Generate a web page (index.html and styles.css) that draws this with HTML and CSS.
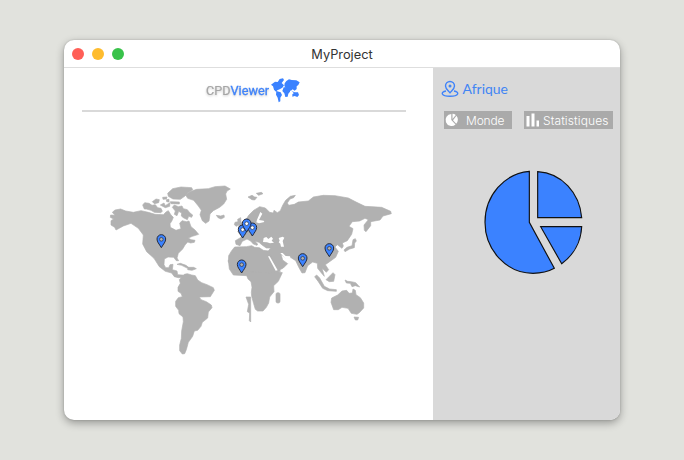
FILE: index.html
```html
<!DOCTYPE html>
<html lang="fr">
<head>
<meta charset="utf-8">
<title>MyProject</title>
<link rel="stylesheet" href="styles.css">
</head>
<body>
<main class="window">
  <header class="titlebar">
    <div class="controls"><i class="dot red"></i><i class="dot yellow"></i><i class="dot green"></i></div>
    <h1 class="title">MyProject</h1>
  </header>
  <div class="content">
    <section class="viewer">
      <div class="brand">
        <svg class="wordmark" width="65" height="20" viewBox="0 0 65 20"><text class="cpd" x="1" y="15" textLength="24.5" lengthAdjust="spacingAndGlyphs">CPD</text><text class="view" x="25.5" y="15" textLength="38.5" lengthAdjust="spacingAndGlyphs">Viewer</text></svg>
        <svg class="globe" width="30" height="26" viewBox="243 20 90 78"><path d="M243 43l12-9 8 1 6-9 10-2 3 5-7 9 7 7-5 7-8 5-7 3-4 4-6-6-3-10zM259 62l13 4 4 8-5 8 0 11-5 3-3-14-5-9zM284 39l5-7 8-5 8 2 14 1 10 6-4 8-5 4 0 8-6 5-6-4-6 5-5-6-9-3-5-6zM281 51l11-2 8 7 0 8-5 6-2 9-7 1-3-11-6-7zM307 72l7-6 10 0 3 8-5 6-8-3-7 2zM305 62l9 4-2 3z"/></svg>
      </div>
      <hr class="rule">
      <svg class="map" width="290" height="178" viewBox="0 0 870 534">
        <g class="land">
          <path d="M30 90L47 87 62 93 85 97 108 92 130 97 150 103 175 104 183 96 190 92 198 105 205 112 200 124 195 131 196 142 213 151 228 146 224 130 231 122 244 125 252 123 258 140 270 150 281 163 262 169 250 174 258 179 270 181 268 187 257 189 248 186 240 195 233 207 220 220 216 234 221 242 214 242 206 232 189 231 178 237 177 254 182 263 191 263 195 254 204 253 202 269 216 273 218 284 231 285 243 287 239 292 220 293 208 290 200 279 181 274 163 260 147 235 125 215 113 192 115 165 100 145 78 130 55 138 33 150 29 142 18 135 18 122 26 117 16 112 17 105 30 106 22 97Z"/>
          <path d="M188 40L203 26 228 21 260 23 263 29 250 37 240 48 226 58 204 57 190 49Z"/>
          <path d="M113 75L119 68 132 70 141 76 151 74 158 83 168 85 172 94 167 98 148 97 138 91 124 87 118 87ZM142 65L153 57 163 59 161 68 148 71ZM166 75L177 69 181 77 195 68 194 79 181 83ZM173 52L186 51 184 57 174 58ZM184 59l8-1 0 8-7-1ZM202 82L208 75 220 80 231 78 235 86 247 89 255 99 263 105 260 112 251 109 247 119 235 113 229 108 230 99 221 94 216 107 208 103 211 93ZM196 65l27 1 0 6-25-1Z"/>
          <path d="M242 45L254 35 275 28 310 26 330 20 360 18 376 27 366 33 362 42 365 58 356 72 344 82 325 92 315 102 312 123 302 130 292 122 285 104 289 91 280 78 266 61 248 55Z"/>
          <path d="M334 106l13 2 10-3 1 7-10 5-9-4Z"/>
          <path d="M216 253l10-3 17 6 10 8-5 1-18-9ZM250 262l16 0 8 4-13 5-13-2Z"/>
          <g transform="translate(180 240)">
            <path d="M58 43L67 41 80 45 91 47 98 60 110 68 126 74 145 83 148 91 141 102 136 110 103 111 108 119 124 125 139 135 141 143 130 156 128 174 112 187 108 199 98 211 88 213 83 229 70 247 64 269 59 281 52 282 44 272 44 255 49 235 50 213 55 185 54 171 42 161 41 151 32 139 32 124 40 113 52 110 48 100 39 94 39 82 46 70 43 59Z"/>
            <path d="M190 0L193 27 205 45 245 47 249 57 258 65 261 82 259 97 260 109 266 131 271 148 278 153 294 153 304 142 311 129 314 111 327 95 326 77 340 64 352 38 342 36 333 31 316 0Z"/>
            <path d="M243 111l14 0 0 75-4-4 1-23-7-4 4-22Z"/><rect x="333" y="98" width="12" height="31" rx="5"/>
          </g>
          <path d="M370 245L371 227 380 212 389 201 424 200 440 197 449 202 463 203 475 211 491 213 503 218 526 274 495 280 387 270Z"/>
          <path d="M391 182L393 193 405 197 412 184 426 177 437 183 445 192 456 196 458 192 449 184 462 187 470 194 484 204 497 204 490 213 504 242 519 272 535 264 548 251 533 240 528 222 542 234 558 233 572 242 582 263 591 279 600 278 608 257 623 246 637 250 638 265 651 281 658 289 651 264 664 277 671 269 661 254 678 242 692 232 700 214 690 201 697 194 711 205 715 198 712 189 727 182 740 163 744 146 732 139 742 125 764 123 780 115 790 119 777 135 778 151 783 155 797 137 797 125 825 120 834 108 859 101 857 94 830 82 780 79 755 67 730 54 690 47 655 46 625 51 610 63 580 66 568 73 551 76 547 69 555 57 566 53 571 46 556 49 542 61 533 76 526 92 517 98 507 91 505 99 494 97 481 84 464 80 446 91 431 106 421 122 423 134 412 151 398 154 410 171Z"/>
          <path d="M398 118l9-5 1 12 7 10-3 9-12 1 2-11-8 5-6-5 2-7 9-2ZM429 51l12-5 8 5 7 1-7 8-8-1ZM454 40l15-3 5 4-13 5Z"/>
          <path d="M744 179l7-3 3 7-5 6-1 14-14 4-14 8-3-5 9-8 15-5Z"/>
          <path d="M635 285l9 9 14 25 16 8 20 2 0 5-26-2-15-7-13-20-11-15ZM666 296l18-18 6 6-4 20-13 1-10-6ZM720 300l8 4 11 1 13 3 12 13-13-4-10 3-5-10-12-1Z"/>
          <path d="M678 367L680 354 698 345 711 333 725 331 732 340 742 339 744 327 751 331 753 344 766 353 776 369 776 384 763 398 756 403 739 400 729 385 711 382 700 389 686 389ZM747 411l14 1-3 8-7 0Z"/>
        </g>
        <g class="water">
          <path d="M474 186l2-12 8-3 6 6 9-7 5 6-4 6 7 6-12 2-9-3Z"/><path d="M521 174l12-4 5 3-5 10 4 17-9 0-2-9-5-4 3-5Z"/>
          <path d="M456 119l10-23 6 5-10 19 14 2 2 4-16 4-8-3Z"/>
          <path d="M489 229l5 0 24 42-6 1ZM526 219l7 0 9 9 13 1 2 7-15 1Z"/>
        </g>
        <defs><g id="pin"><path class="pin" d="M0 19C-7 7-13 2-13-7a13 13 0 0 1 26 0C13 2 7 7 0 19Z"/><circle class="pin-hole" cy="-6" r="5.500"/></g></defs>
        <use href="#pin" x="169" y="184"/><g class="light"><use href="#pin" x="442" y="149"/><use href="#pin" x="413" y="155"/><use href="#pin" x="425" y="137"/></g>
        <use href="#pin" x="410" y="260"/><use href="#pin" x="593" y="241"/><use href="#pin" x="673" y="211"/>
      </svg>
    </section>
    <aside class="panel">
      <div class="region">
        <svg width="18" height="17" viewBox="0 0 18 17"><path d="M9 11.800C7 9.500 4.500 7.800 4.500 5a4.500 4.500 0 0 1 9 0C13.500 7.800 11 9.500 9 11.800ZM5 10C-1 11 0 15.300 9 15.300s10-4.300 4-5.300"/><circle class="fill" cx="9" cy="5" r="1.500"/></svg>
        <svg width="50" height="20" viewBox="0 0 50 20"><text x="1.500" y="14.500" textLength="45.500" lengthAdjust="spacingAndGlyphs">Afrique</text></svg>
      </div>
      <nav class="tabs">
        <button class="tab world"><svg width="14" height="14" viewBox="0 0 14 14"><path d="M6.300 1v6l4.200 4.500A6 6 0 1 1 6.300 1ZM7.500.8A6 6 0 0 1 10.800 2L7.500 6ZM11.500 2.800a6 6 0 0 1-.3 8L8 7.200Z"/></svg><svg class="label" width="42" height="18" viewBox="0 0 42 18"><text x="1" y="13.500" textLength="38.500">Monde</text></svg></button>
        <button class="tab stats"><svg width="14" height="14" viewBox="0 0 14 14"><path d="M1.500 3h3v10.500h-3ZM6.500 .5h3v13h-3ZM11.500 7.500H14v6h-2.500Z"/></svg><svg class="label" width="68" height="18" viewBox="0 0 68 18"><text x="2" y="13.500" textLength="65.500">Statistiques</text></svg></button>
      </nav>
      <svg class="pie" width="100" height="106" viewBox="0 0 300 318">
        <path d="M139 10C65 16 6 82 6 163C6 248 72 316 150 316C174 316 196 311 214 301L139 163Z"/><path d="M164 11C236 15 290 75 296 149H164Z"/><path d="M173 176H296C294 222 271 262 236 287Z"/>
      </svg>
    </aside>
  </div>
</main>
</body>
</html>
```

FILE: styles.css
```css
* { box-sizing: border-box; }
body { margin: 0; height: 460px; padding: 40px 64px; background: #e1e2dd; font-family: Inter, sans-serif; }
svg { display: block; flex: none; overflow: visible; }
.window { width: 556px; height: 380px; overflow: hidden; border-radius: 10px; background: #fff; box-shadow: 0 0 2px #0003, 0 3px 9px #0005; }
.titlebar { display: grid; grid-template-columns: 70px 1fr 70px; align-items: center; height: 28px; border-bottom: 1px solid #dedede; }
.controls { display: flex; gap: 8px; padding-left: 8px; }
.dot { width: 12px; height: 12px; border-radius: 50%; }
.red { background: #ff5f57; }
.yellow { background: #febc2e; }
.green { background: #39c24a; }
.title { margin: 2px 0 0; text-align: center; font-size: 12.800px; font-weight: 400; line-height: 16px; color: #333; }
.content { display: grid; grid-template-columns: 369px 187px; height: 352px; }
.viewer { padding: 9px 0 0; }
.brand { display: flex; align-items: center; gap: 1px; height: 26px; margin-left: 141px; }
.wordmark { font: 12.500px Roboto, sans-serif; filter: drop-shadow(0 1px 1px #0003); }
.cpd { fill: #a6a6a6; stroke: #a6a6a6; stroke-width: .2; }
.view { fill: #3f83fa; stroke: #3f83fa; stroke-width: .3; }
.globe { fill: #3b82ff; }
.rule { width: 324px; height: 2px; margin: 7px 0 0 18px; border: 0; background: #d9d9d9; }
.map { margin: 68px 0 0 41px; }
.land { fill: #b1b1b1; stroke: #b1b1b1; stroke-width: 2; stroke-linejoin: round; }
.water { fill: #fff; }
.pin { fill: #3b82ff; stroke: #252c3d; stroke-width: 3; }
.light { --hole: #fff; }
.pin-hole { fill: var(--hole, #b1b1b1); stroke: #252c3d; stroke-width: 2; }
.panel { background: #d9d9d9; }
.region { display: flex; align-items: center; gap: 2px; height: 20px; margin: 11px 0 0 8px; }
.region path { fill: none; stroke: #3f83fa; stroke-width: 1.400; }
.region text, .fill { fill: #4285f4; }
.region text { font: 12.500px Lato, sans-serif; }
.tabs { display: flex; gap: 12px; margin: 12px 0 0 11px; }
.tab { display: flex; align-items: center; height: 18px; padding: 0 1px; border: 0; background: #aaa; fill: #fff; font: 300 12px Inter, sans-serif; }
.world { width: 68px; gap: 6px; }
.stats { width: 89px; gap: 2px; }
.pie { margin: 39px 0 0 50px; fill: #3b82ff; stroke: #111; stroke-width: 3.500; }
```
